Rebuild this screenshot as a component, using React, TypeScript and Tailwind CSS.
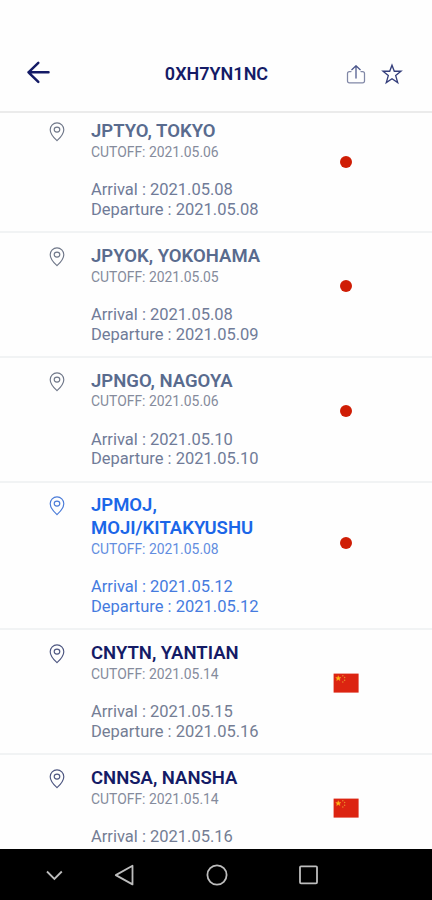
import React from "react";

type Port = {
  name: string[];
  cutoff: string;
  arrival: string;
  departure: string;
  country: "jp" | "cn";
  state: "past" | "current" | "next";
};

const ports: Port[] = [
  { name: ["JPTYO, TOKYO"], cutoff: "2021.05.06", arrival: "2021.05.08", departure: "2021.05.08", country: "jp", state: "past" },
  { name: ["JPYOK, YOKOHAMA"], cutoff: "2021.05.05", arrival: "2021.05.08", departure: "2021.05.09", country: "jp", state: "past" },
  { name: ["JPNGO, NAGOYA"], cutoff: "2021.05.06", arrival: "2021.05.10", departure: "2021.05.10", country: "jp", state: "past" },
  { name: ["JPMOJ,", "MOJI/KITAKYUSHU"], cutoff: "2021.05.08", arrival: "2021.05.12", departure: "2021.05.12", country: "jp", state: "current" },
  { name: ["CNYTN, YANTIAN"], cutoff: "2021.05.14", arrival: "2021.05.15", departure: "2021.05.16", country: "cn", state: "next" },
  { name: ["CNNSA, NANSHA"], cutoff: "2021.05.14", arrival: "2021.05.16", departure: "2021.05.17", country: "cn", state: "next" },
];

const tones = {
  past: { title: "text-[#596b8e]", sub: "text-[#858b9c]", body: "text-[#707b98]", pin: "text-[#6f7789]" },
  current: { title: "text-[#1b66e8]", sub: "text-[#628de0]", body: "text-[#457bdf]", pin: "text-[#4a7bd8]" },
  next: { title: "text-[#141b66]", sub: "text-[#858b9c]", body: "text-[#747d94]", pin: "text-[#4d5680]" },
};

function Pin({ className }: { className: string }) {
  return (
    <svg className={className} width="16" height="20" viewBox="0 0 16 20" fill="none" stroke="currentColor" strokeWidth="1.15">
      <path d="M8 18.7C5.4 16.3 1.2 12.2 1.2 7.7a6.8 6.8 0 0 1 13.6 0c0 4.500-4.200 8.600-6.800 11Z" />
      <ellipse cx="8" cy="7.600" rx="2.800" ry="2.500" />
    </svg>
  );
}

function Flag({ country }: { country: "jp" | "cn" }) {
  if (country === "jp") {
    return (
      <svg width="26" height="20" viewBox="0 0 26 20">
        <circle cx="13" cy="10" r="6" fill="#cf1d05" />
      </svg>
    );
  }
  return (
    <svg width="26" height="20" viewBox="0 0 26 20">
      <rect x="0.600" y="0.600" width="25" height="19" fill="#dc2411" />
      <path d="m5.300 2.700.7 1.700 1.900.1-1.400 1.200.4 1.800-1.600-1-1.600 1 .4-1.800-1.400-1.200 1.900-.1Z" fill="#ffb818" stroke="#f9a31a" strokeWidth=".5" />
      <g fill="#e98a2a">
        <circle cx="9.800" cy="2.700" r=".75" />
        <circle cx="11.600" cy="4.600" r=".75" />
        <circle cx="11.600" cy="7.200" r=".75" />
        <circle cx="9.800" cy="9" r=".75" />
      </g>
    </svg>
  );
}

function PortRow({ port, first }: { port: Port; first: boolean }) {
  const tone = tones[port.state];
  const flagSpace = first ? "pt-[39px]" : port.name.length > 1 ? "pt-[50px]" : "pt-[43px]";
  return (
    <li className="flex shrink-0 items-start border-b-2 border-[#f1f3f4] pb-[11.700px]">
      <div className={`w-[91px] pl-[49px] ${first ? "pt-[9px]" : "pt-[13.500px]"}`}>
        <Pin className={tone.pin} />
      </div>
      <div className={`w-[241.500px] whitespace-nowrap ${first ? "pt-[7px]" : "pt-[11.500px]"}`}>
        <h2 className={`text-[18.500px] leading-[22.800px] font-semibold ${tone.title}`}>
          {port.name.map((line) => (
            <span key={line} className="block">{line}</span>
          ))}
        </h2>
        <p className={`text-[13.900px] leading-[18px] ${tone.sub}`}>CUTOFF: {port.cutoff}</p>
        <div className={`mt-[19.400px] text-[16.500px] leading-[19.700px] ${tone.body}`}>
          <p>Arrival : {port.arrival}</p>
          <p>Departure : {port.departure}</p>
        </div>
      </div>
      <div className={flagSpace}>
        <Flag country={port.country} />
      </div>
    </li>
  );
}

export default function App() {
  return (
    <div className="flex h-[900px] w-[432px] flex-col overflow-hidden bg-[#fefefe] font-['Roboto',sans-serif]">
      <header className="flex h-[113px] shrink-0 items-start border-b-2 border-[#ebebeb] pt-[60px]">
        <div className="w-[120px] pl-[26px]">
          <svg width="24" height="24" viewBox="0 0 24 24" fill="none" stroke="#141b66" strokeWidth="2.500" strokeLinecap="round" strokeLinejoin="round">
            <path d="M22.500 12.300H2.500M12.300 2.800 2.500 12.300l9.800 9.500" />
          </svg>
        </div>
        <h1 className="w-[193px] text-center text-[18px] leading-[27px] font-semibold text-[#141b66]">0XH7YN1NC</h1>
        <div className="flex gap-[14px] pt-[3px] pl-[32px]">
          <svg width="22" height="22" viewBox="0 0 22 22" fill="none" strokeLinecap="round" strokeLinejoin="round" strokeWidth="1.250">
            <path d="M6 8.500H4.500Q2.500 8.500 2.500 10.500v7.500q0 1.800 2 1.800h13q2 0 2-1.800v-7.500q0-2-2-2H16" stroke="#8087a6" />
            <path d="M11 15V3M6.800 6.700 11 2.700l4.200 4" stroke="#4b568b" />
          </svg>
          <svg width="22" height="22" viewBox="0 0 22 22" fill="none" stroke="#343e7b" strokeWidth="1.350" strokeLinejoin="miter">
            <path d="m11 2.200 2.300 6h6.700l-5.300 4.400 2 7L11 15.700l-5.700 3.900 2-7L2 8.200h6.700Z" />
          </svg>
        </div>
      </header>
      <ul className="flex min-h-0 flex-1 flex-col overflow-hidden">
        {ports.map((port, index) => (
          <PortRow key={port.name[0]} port={port} first={index === 0} />
        ))}
      </ul>
      <nav className="flex h-[51px] shrink-0 items-center bg-black pl-[44px]">
        <svg width="20" height="24" viewBox="0 0 20 24" fill="none" stroke="#bdbdbd" strokeWidth="1.800">
          <path d="m3 8.500 7.400 7.500 7.400-7.500" />
        </svg>
        <svg className="ml-[50px]" width="22" height="24" viewBox="0 0 22 24" fill="none" stroke="#bdbdbd" strokeWidth="1.800" strokeLinejoin="round">
          <path d="M18.500 2.800v18.600L1.800 12.100Z" />
        </svg>
        <svg className="ml-[69px]" width="24" height="24" viewBox="0 0 24 24" fill="none" stroke="#bdbdbd" strokeWidth="1.800">
          <circle cx="12" cy="12" r="9.600" />
        </svg>
        <svg className="ml-[68px]" width="24" height="24" viewBox="0 0 24 24" fill="none" stroke="#bdbdbd" strokeWidth="1.800">
          <rect x="3" y="3.300" width="17" height="17" rx="1" />
        </svg>
      </nav>
    </div>
  );
}
